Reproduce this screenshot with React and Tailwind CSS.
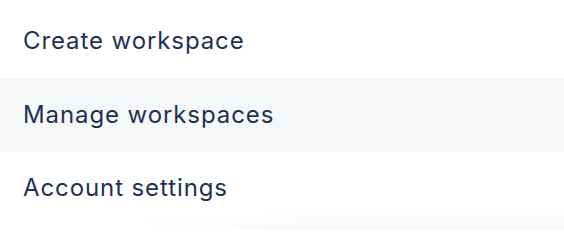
const items = [
  { label: "Create workspace", cls: "h-[77px] pt-[4px] bg-white" },
  { label: "Manage workspaces", cls: "h-[75px] bg-[#f5f7f9]" },
  { label: "Account settings", cls: "h-[78px] pb-[6px] bg-white" },
];

export default function App() {
  return (
    <div className="relative w-[564px] h-[230px] bg-white overflow-hidden">
      <ul className="flex flex-col">
        {items.map((it) => (
          <li
            key={it.label}
            className={
              "flex items-center pl-[23px] text-[24px] tracking-[0.9px] text-[#1e3250] [font-family:Inter,'Open_Sans',sans-serif] " +
              it.cls
            }
          >
            {it.label}
          </li>
        ))}
      </ul>
      <div className="pointer-events-none absolute left-0 right-0 bottom-0 h-[22px] bg-[linear-gradient(to_bottom,rgba(0,0,0,0),rgba(0,0,0,0.028))] [mask-image:linear-gradient(to_right,transparent_110px,black_320px)]" />
    </div>
  );
}
